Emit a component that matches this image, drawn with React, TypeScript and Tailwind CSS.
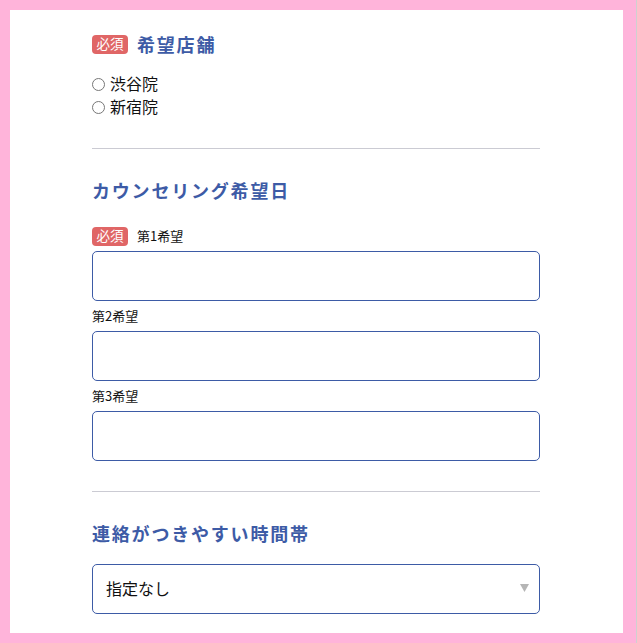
import React from "react";

const font = { fontFamily: '"Noto Sans CJK JP", "Noto Sans", sans-serif' };

function Badge() {
  return (
    <span className="inline-flex h-[19px] w-[36px] items-center justify-center rounded-[4px] bg-[#e06666] text-[13.5px] leading-none text-white">
      必須
    </span>
  );
}

function Heading({ children }: { children: React.ReactNode }) {
  return (
    <h2 className="text-[18px] font-bold leading-[26px] tracking-[0.1em] text-[#3d5ba6]">{children}</h2>
  );
}

function Radio({ label }: { label: string }) {
  return (
    <label className="flex h-[23px] items-center gap-[5px] text-[16px] text-[#111]">
      <span className="mt-[3px] h-[13px] w-[13px] rounded-full border border-[#777] bg-white" />
      <span>{label}</span>
    </label>
  );
}

function Field() {
  return <div className="h-[50px] w-full rounded-[5px] border border-[#3d5ba6] bg-white" />;
}

export default function App() {
  return (
    <div className="flex h-[643px] w-[637px] bg-[#ffb4da]" style={font}>
      <div className="ml-[10px] mt-[10px] h-[623px] w-[613px] overflow-hidden bg-white">
        <div className="ml-[82px] w-[448px] pt-[22px]">
          <div className="flex h-[24px] items-center gap-[9px]">
            <Badge />
            <Heading>希望店舗</Heading>
          </div>
          <div className="mt-[15px] flex flex-col">
            <Radio label="渋谷院" />
            <Radio label="新宿院" />
          </div>
          <div className="mt-[31px] h-px bg-[#cbcbd3]" />
          <div className="mt-[28px]">
            <Heading>カウンセリング希望日</Heading>
          </div>
          <div className="mt-[23px] flex h-[20px] items-center gap-[9px]">
            <Badge />
            <span className="text-[13px] text-[#111]">第1希望</span>
          </div>
          <div className="mt-[5px]">
            <Field />
          </div>
          <div className="mt-[6px] flex h-[18px] items-center text-[13px] text-[#111]">第2希望</div>
          <div className="mt-[6px]">
            <Field />
          </div>
          <div className="mt-[6px] flex h-[18px] items-center text-[13px] text-[#111]">第3希望</div>
          <div className="mt-[6px]">
            <Field />
          </div>
          <div className="mt-[30px] h-px bg-[#cbcbd3]" />
          <div className="mt-[28px]">
            <Heading>連絡がつきやすい時間帯</Heading>
          </div>
          <div className="mt-[18px] flex h-[50px] w-full items-center justify-between rounded-[5px] border border-[#3d5ba6] bg-white pb-[2px] pl-[13px] pr-[10px]">
            <span className="text-[16px] text-[#111]">指定なし</span>
            <svg width="9" height="8" viewBox="0 0 9 8">
              <path d="M0 0 H9 L4.5 8 Z" fill="#b5b5b5" />
            </svg>
          </div>
        </div>
      </div>
      <div className="ml-auto h-full w-px bg-[#d0d0d0]" />
    </div>
  );
}
